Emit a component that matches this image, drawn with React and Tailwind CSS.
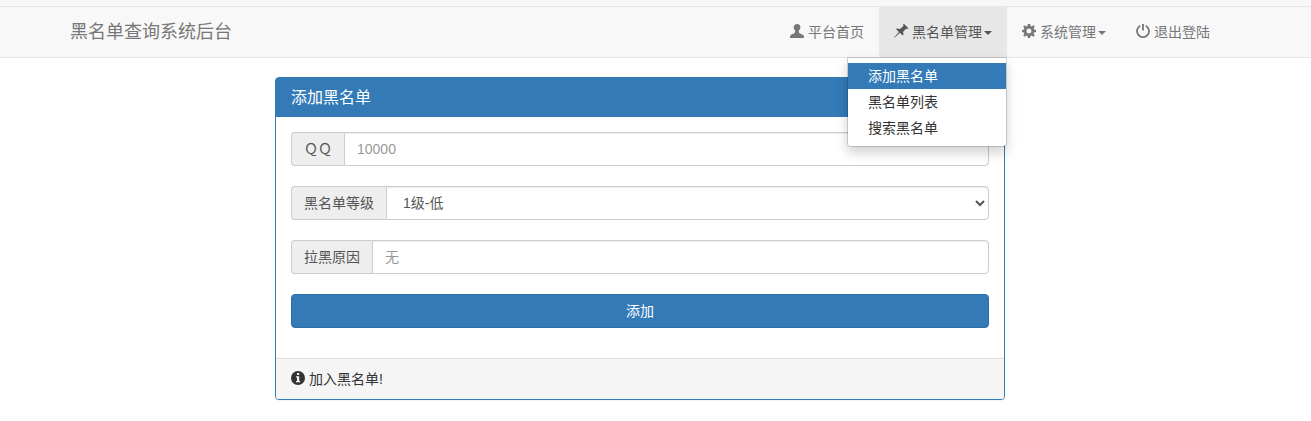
import React from "react";

function UserIcon() {
  return (
    <svg className="-mt-0.5 w-3.5 h-3.5 shrink-0" viewBox="0 0 14 14" fill="currentColor">
      <path d="M7.200 0C5 0 3.700 1.300 3.700 3.200c0 .9.2 1.600.6 2.300.4.700.700 1.100.8 1.600.1.800 0 1.400-.5 1.800-.6.500-2 1-3.200 1.500C.4 10.900 0 11.700 0 13v1h14v-1c0-1.300-.6-2.100-1.600-2.600-1.200-.5-2.500-1-3.100-1.500-.5-.4-.6-1-.5-1.800.1-.5.500-.9.900-1.600.4-.7.700-1.400.7-2.300C10.400 1.300 9.300 0 7.200 0z" />
    </svg>
  );
}

function PinIcon() {
  return (
    <svg className="-mt-0.5 w-3.5 h-3.5 shrink-0 overflow-visible" viewBox="0 0 14 14" fill="currentColor">
      <path d="M9.900-.2 14.400 4.200l-.7.700-1.400-.4-3.200 3.200.4 3.100-.8.700-2.800-2.700L1.300 12.900 0 14l.9-1.500 4-4.500L2.100 5.300l.8-.8 3.100.4 3.500-3L9.100.6z" />
    </svg>
  );
}

function CogIcon() {
  return (
    <svg className="-mt-0.5 w-3.5 h-3.5 shrink-0" viewBox="0 0 14 14" fill="currentColor">
      <path
        fillRule="evenodd"
        d="M5.900 0h2.200l.5 1.900 1.100.5 1.700-1.200 1.400 1.400-1.200 1.700.5 1.100L14 5.900v2.200l-1.900.5-.5 1.100 1.200 1.700-1.400 1.400-1.700-1.200-1.100.5L8.100 14H5.900l-.5-1.900-1.100-.5-1.700 1.200-1.400-1.400 1.200-1.700-.5-1.100L0 8.100V5.900l1.900-.5.5-1.100-1.200-1.700 1.400-1.400 1.700 1.200 1.100-.5zM7 4.500a2.500 2.500 0 1 0 0 5 2.500 2.500 0 0 0 0-5z"
      />
    </svg>
  );
}

function PowerIcon() {
  return (
    <svg
      className="-mt-0.5 w-3.5 h-3.5 shrink-0"
      viewBox="0 0 14 14"
      fill="none"
      stroke="currentColor"
      strokeWidth="1.8"
    >
      <path d="M4.300 1.700a6 6 0 1 0 5.400 0M7 0v6.500" />
    </svg>
  );
}

function InfoIcon() {
  return (
    <svg className="-mt-0.5 w-3.5 h-3.5 shrink-0" viewBox="0 0 14 14" fill="currentColor">
      <path
        fillRule="evenodd"
        d="M7 0a7 7 0 1 0 0 14A7 7 0 0 0 7 0zM6 2h2.200v1.900H6zM5 5.200h3.200v4.700h1v1.400H5V9.900h1V6.600H5z"
      />
    </svg>
  );
}

function Caret() {
  return (
    <span className="ml-0.5 mt-0.5 border-x-4 border-t-4 border-x-transparent border-t-current" />
  );
}

function NavItem({ icon, label, caret, active, children }) {
  return (
    <li
      className={`relative h-[50px] ${active ? "bg-[#e7e7e7] text-[#555]" : "text-[#777]"}`}
    >
      <a href="#" className="flex h-full items-center px-[15px]">
        {icon}
        <span className="ml-1">{label}</span>
        {caret && <Caret />}
      </a>
      {children}
    </li>
  );
}

function DropdownMenu() {
  return (
    <ul className="absolute right-0 top-full z-10 w-40 rounded-b border border-black/15 bg-white bg-clip-padding py-[5px] text-[#333] shadow-[0_6px_12px_rgba(0,0,0,0.175)]">
      {["添加黑名单", "黑名单列表", "搜索黑名单"].map((item, i) => (
        <li
          key={item}
          className={`px-5 py-[3px] leading-5 ${i === 0 ? "bg-[#337ab7] text-white" : ""}`}
        >
          {item}
        </li>
      ))}
    </ul>
  );
}

function InputGroup({ label, children }) {
  return (
    <div className="mb-5 flex h-[34px]">
      <span className="flex shrink-0 items-center rounded-l border border-r-0 border-[#ccc] bg-[#eee] px-3 text-[#555]">
        {label}
      </span>
      {children}
    </div>
  );
}

const control =
  "min-w-0 flex-1 rounded-r border border-[#ccc] bg-white px-3 text-sm text-[#555] shadow-[inset_0_1px_1px_rgba(0,0,0,0.075)] outline-none placeholder:text-[#999]";

export default function App() {
  return (
    <div className="h-[421px] overflow-hidden bg-white font-['Liberation_Sans','Noto_Sans_CJK_SC',sans-serif] text-sm leading-5 text-[#333]">
      <div className="h-[7px] border-b border-[#e7e7e7] bg-[#f8f8f8]" />
      <nav className="h-[51px] border-b border-[#e7e7e7] bg-[#f8f8f8]">
        <div className="ml-[70px] flex w-[1155px] justify-between">
          <a href="#" className="flex h-[50px] items-center text-lg text-[#777]">
            黑名单查询系统后台
          </a>
          <ul className="flex">
            <NavItem icon={<UserIcon />} label="平台首页" />
            <NavItem icon={<PinIcon />} label="黑名单管理" caret active>
              <DropdownMenu />
            </NavItem>
            <NavItem icon={<CogIcon />} label="系统管理" caret />
            <NavItem icon={<PowerIcon />} label="退出登陆" />
          </ul>
        </div>
      </nav>

      <div className="ml-[275px] mt-[19px] w-[730px] rounded border border-[#337ab7] bg-white shadow-[0_1px_1px_rgba(0,0,0,0.05)]">
        <div className="flex h-[39px] items-center bg-[#337ab7] px-[15px] text-base text-white">
          <h3>添加黑名单</h3>
        </div>
        <div className="px-[15px] pt-[15px] pb-[30px]">
          {/* fullwidth Q, same advance as the Chinese labels */}
          <InputGroup label={"\uFF31\uFF31"}>
            <input type="text" placeholder="10000" className={control} />
          </InputGroup>
          <InputGroup label="黑名单等级">
            <select className={control}>
              <option>1级-低</option>
            </select>
          </InputGroup>
          <InputGroup label="拉黑原因">
            <input type="text" placeholder="无" className={control} />
          </InputGroup>
          <button className="block h-[34px] w-full rounded border border-[#2e6da4] bg-[#337ab7] text-white">
            添加
          </button>
        </div>
        <div className="flex h-[41px] items-center rounded-b-[3px] border-t border-[#ddd] bg-[#f5f5f5] px-[15px]">
          <InfoIcon />
          <span className="ml-1">加入黑名单!</span>
        </div>
      </div>
    </div>
  );
}
